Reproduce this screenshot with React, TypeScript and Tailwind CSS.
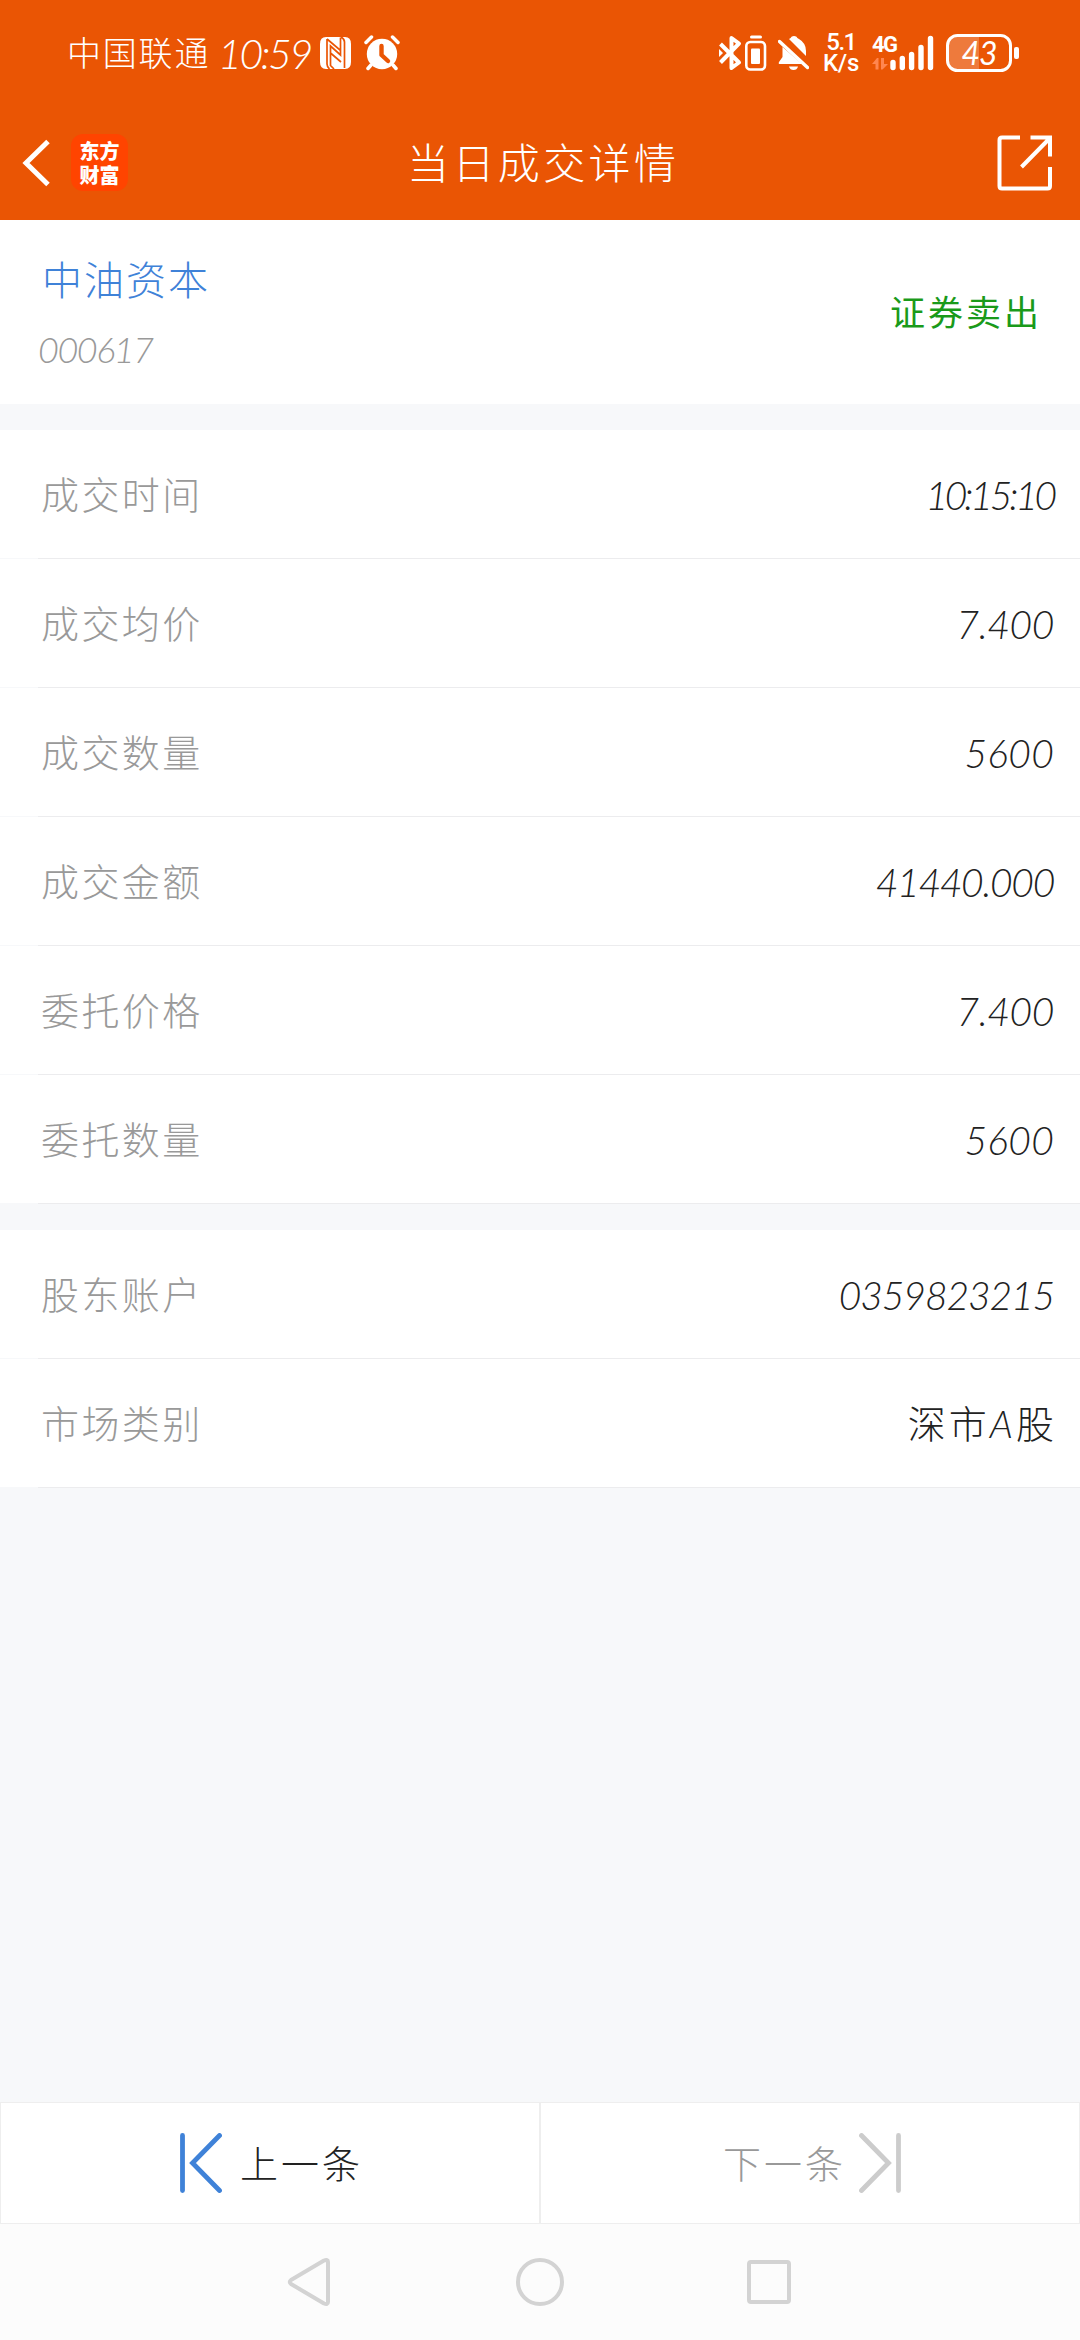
import type { ReactNode } from 'react';

const tradeRows = [
  { label: '成交时间', value: '10:15:10', tracking: 'tracking-[-3.2px]' },
  { label: '成交均价', value: '7.400', tracking: 'tracking-[-0.4px]' },
  { label: '成交数量', value: '5600', tracking: 'tracking-[0.2px]' },
  { label: '成交金额', value: '41440.000', tracking: 'tracking-[-1.3px]' },
  { label: '委托价格', value: '7.400', tracking: 'tracking-[-0.4px]' },
  { label: '委托数量', value: '5600', tracking: 'tracking-[0.2px]' },
];

const CJK = "font-['Lato','Noto_Sans_CJK_SC',sans-serif]";

function StatusBar() {
  return (
    <div className="flex h-[72px] items-end pl-[67px] text-white">
      <div className="flex h-[38px] items-center">
        <span className="w-[151px] text-[34px] font-light tracking-[1.8px] leading-none whitespace-nowrap">中国联通</span>
        <span className="w-[102px] text-[41px] font-light italic leading-none tracking-[-2.4px] whitespace-nowrap">10:59</span>
        {/* NFC */}
        <svg width="31" height="34" viewBox="0 0 31 34" className="block">
          <path d="M6 1H25Q31 1 31 8V26Q31 33 25 33H6Q0 33 0 26V8Q0 1 6 1Z" fill="#fff" />
          <path d="M7 3V28Q7 31 9.500 33M7 3L20.500 14.500V1.500M20.500 14.500V19L10.500 10V29.500L14 33M10.500 17L21 26M21 1Q24.500 3 24.500 6V32" stroke="#ea5504" strokeWidth="1.700" fill="none" />
        </svg>
        {/* Alarm */}
        <svg width="36" height="36" viewBox="0 0 36 36" className="ml-[13px] block">
          <circle cx="18" cy="19" r="15.200" fill="#fff" />
          <path d="M2 7.500L7.500 2M34 7.500L28.500 2M7 30L4 33.500M29 30L32 33.500" stroke="#fff" strokeWidth="3.500" strokeLinecap="round" />
          <path d="M17.500 11V20L24 26" stroke="#ea5504" strokeWidth="4.400" fill="none" strokeLinecap="round" strokeLinejoin="round" />
        </svg>
      </div>
      <div className="ml-auto flex h-[38px] items-center pr-[60px]">
        {/* Bluetooth + device battery */}
        <svg width="48" height="36" viewBox="0 0 48 36" className="block">
          <path d="M1.500 9L20 27.500L12.500 33V3L20 8.500L1.500 27.500" stroke="#fff" strokeWidth="4" fill="none" strokeLinejoin="round" />
          <path d="M0 14L4 18L0 22Z" fill="#fff" />
          <rect x="31" y="0.500" width="12" height="3" rx="1.500" fill="#fff" />
          <rect x="27.300" y="7" width="18.700" height="27.500" rx="4" stroke="#fff" strokeWidth="2.600" fill="none" />
          <rect x="32" y="13.500" width="9" height="15.500" rx="1" fill="#fff" />
        </svg>
        {/* Muted bell */}
        <svg width="31" height="36" viewBox="0 0 31 36" className="ml-[11px] block">
          <path d="M11 4Q13 3 13.500 1.800Q16 0 18.500 1.800Q19 3 21 4Q28 8 28 16V21ZM4.500 12L24 29H2Q0 29 1 27L4.500 22Z" fill="#fff" />
          <path d="M1.500 6.500L29.500 32.500" stroke="#fff" strokeWidth="3.400" strokeLinecap="round" />
          <path d="M11 31.500H20Q19 35 15.500 35Q12 35 11 31.500Z" fill="#fff" />
        </svg>
        <div className="ml-[14px] flex w-[36px] flex-col items-center font-['Roboto',sans-serif] text-[24px] font-medium leading-[21px] whitespace-nowrap">
          <span className="tracking-[-1.5px]">5.1</span>
          <span className="tracking-[-0.3px]">K/s</span>
        </div>
        {/* Signal */}
        <div className="relative ml-[13px] h-[36px] w-[63px]">
          <span className="absolute top-0 left-0 font-['Roboto',sans-serif] text-[22px] font-bold leading-[20px] tracking-[-1.5px]">4G</span>
          <svg width="63" height="36" viewBox="0 0 63 36" className="block">
            <path d="M0 29L5 23H6.500V34.500H3.500V29ZM9 23H12V29H16L10.500 34.500H9Z" fill="#ff8650" />
            <path d="M21 27.500V32.500M30.300 23.500V32.500M39.600 19.500V32.500M49 12.500V32.500M58.500 3.500V32.500" stroke="#fff" strokeWidth="5.400" strokeLinecap="round" />
          </svg>
        </div>
        {/* Phone battery */}
        <div className="relative ml-[11px] h-[38px] w-[74px]">
          <svg width="74" height="38" viewBox="0 0 74 38" className="block">
            <path d="M33 2H11Q2 2 2 11V27Q2 36 11 36H33Z" fill="#ee7a3c" />
            <rect x="1.500" y="1.500" width="63" height="35" rx="10" stroke="#fff" strokeWidth="3" fill="none" />
            <rect x="68" y="13" width="5" height="12" rx="2" fill="#fff" />
          </svg>
          <span className="absolute inset-y-0 left-0 w-[66px] text-center text-[32px] italic leading-[37px] tracking-[-1px]">43</span>
        </div>
      </div>
    </div>
  );
}

function Header() {
  return (
    <header className="h-[220px] bg-[#ea5504]">
      <StatusBar />
      <div className="flex h-[148px] items-center pt-[50px] pb-[17px] pl-[22px] pr-[27px]">
        <svg width="30" height="50" viewBox="0 0 30 50" className="block">
          <path d="M26 3.500L4 25L26 46.500" stroke="#fff" strokeWidth="5" fill="none" />
        </svg>
        <div className="ml-[19px] flex h-[57px] w-[57px] flex-col items-center justify-center rounded-xl bg-[#ff4400] text-[20px] font-black leading-[24px] text-white">
          <span>东方</span>
          <span>财富</span>
        </div>
        <h1 className="ml-[279px] text-[42px] font-light leading-none tracking-[3.4px] text-white">当日成交详情</h1>
        <svg width="56" height="56" viewBox="0 0 56 56" className="ml-auto block">
          <path d="M23 2.500H5Q2.500 2.500 2.500 5V51Q2.500 53.500 5 53.500H50.500Q53 53.500 53 51V32M33.500 2.500H53V21.500M53 3L24.500 32" stroke="#fff" strokeWidth="4" fill="none" />
        </svg>
      </div>
    </header>
  );
}

function Row({ label, children }: { label: string; children: ReactNode }) {
  return (
    <div className="h-[129px]">
      <div className="flex h-[128px] items-center justify-between bg-white pr-[26px] pl-[41px]">
        <span className="text-[38px] font-light leading-none tracking-[2.4px] text-[#999]">{label}</span>
        {children}
      </div>
      {/* Inset divider */}
      <div className="ml-[38px] h-px bg-[#ececee]" />
    </div>
  );
}

function NumberValue({ value, tracking }: { value: string; tracking: string }) {
  return <span className={`pt-0.5 text-[39px] font-light italic leading-none text-[#222] ${tracking}`}>{value}</span>;
}

function StepIcon() {
  return (
    <svg width="42" height="60" viewBox="0 0 42 60" className="block">
      <path d="M2.500 2.500V57.500M39.500 2.500L12.500 30L39.500 57.500" stroke="currentColor" strokeWidth="4.800" fill="none" strokeLinecap="round" />
    </svg>
  );
}

function Pager() {
  return (
    <div className="grid h-[122px] grid-cols-2 text-[38px] font-light leading-none tracking-[3px]">
      <button className="flex items-center border border-[#eee] bg-white pl-[179px] text-[#222]">
        <span className="text-[#3f82d8]"><StepIcon /></span>
        <span className="ml-[18px]">上一条</span>
      </button>
      <button className="flex items-center border border-[#eee] bg-white pl-[182px] text-[#999]">
        <span>下一条</span>
        <span className="ml-[13px] rotate-180 text-[#ccc]"><StepIcon /></span>
      </button>
    </div>
  );
}

function NavBar() {
  return (
    <nav className="flex h-[116px] items-center bg-[#fcfcfc] pl-[286px]">
      <svg width="508" height="52" viewBox="0 0 508 52" fill="none" stroke="#d3d3d3" strokeWidth="4" strokeLinejoin="round">
        <path d="M5 24L38 4.500Q42 3 42 6V46Q42 49 38 47.500L5 28Q2.500 26 5 24Z" />
        <circle cx="254" cy="26" r="22" />
        <rect x="463" y="6" width="40" height="40" rx="2" />
      </svg>
    </nav>
  );
}

export default function App() {
  return (
    <div className={`flex h-[2340px] w-[1080px] flex-col overflow-hidden bg-[#f7f8fa] ${CJK}`}>
      <Header />
      <section className="flex h-[184px] items-center justify-between bg-white pr-[38px] pl-[38px]">
        <div className="pt-0.5">
          <div className="pl-[4px] text-[40px] font-light leading-none tracking-[2px] text-[#3f82d8]">中油资本</div>
          <div className="mt-[31px] text-[36px] font-light italic leading-none tracking-[-1.5px] text-[#999]">000617</div>
        </div>
        <span className="text-[35px] leading-none tracking-[3px] text-[#1a9a1a]">证券卖出</span>
      </section>
      <section className="mt-[26px]">
        {tradeRows.map((row) => (
          <Row key={row.label} label={row.label}>
            <NumberValue value={row.value} tracking={row.tracking} />
          </Row>
        ))}
      </section>
      <section className="mt-[26px]">
        <Row label="股东账户">
          <NumberValue value="0359823215" tracking="tracking-[-1.1px]" />
        </Row>
        <Row label="市场类别">
          <span className="-mr-[3px] text-[38px] font-light leading-none tracking-[3px] text-[#222]">
            深市<i>A</i>股
          </span>
        </Row>
      </section>
      <div className="mt-auto">
        <Pager />
        <NavBar />
      </div>
    </div>
  );
}
